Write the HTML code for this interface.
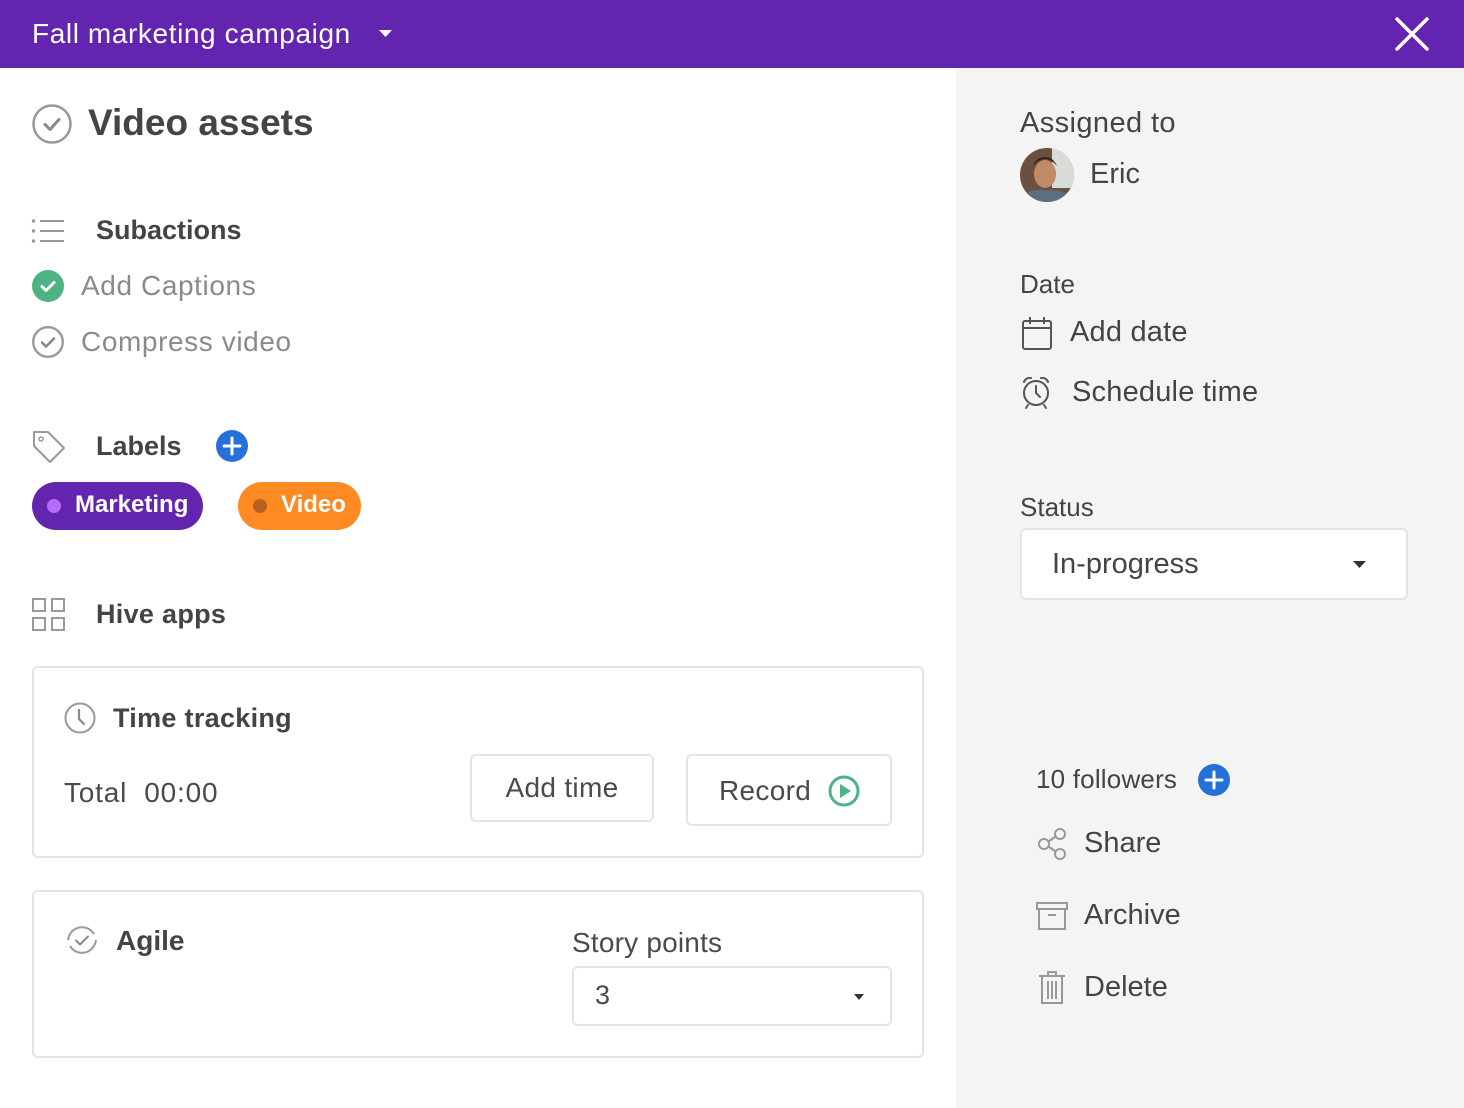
<!DOCTYPE html>
<html><head><meta charset="utf-8"><style>
*{margin:0;padding:0;box-sizing:border-box}
body{width:1464px;height:1108px;overflow:hidden;background:#fff;font-family:"Liberation Sans",sans-serif;color:#444;position:relative}
.a{position:absolute;white-space:nowrap}
.hdr{left:0;top:0;width:1464px;height:68px;background:#6324b0}
.side{left:956px;top:68px;width:508px;height:1040px;background:#f4f4f4}
.box{border:2px solid #e4e4e4;border-radius:6px;background:#fff}
.b{font-weight:bold;color:#444}
svg{position:absolute;overflow:visible}
</style></head><body>
<div class="a hdr"></div>
<div class="a" style="left:32px;top:18px;font-size:28px;color:#fff;letter-spacing:0.6px">Fall marketing campaign</div>
<svg style="left:379px;top:30px" width="14" height="8"><path d="M0 0H13L6.5 7Z" fill="#fff"/></svg>
<svg style="left:1395px;top:17px" width="34" height="34"><path d="M2 2L32 32M32 2L2 32" stroke="#fff" stroke-width="3.5" stroke-linecap="round"/></svg>
<div class="a side"></div>

<svg style="left:32px;top:104px" width="40" height="40"><circle cx="20" cy="20" r="18.5" fill="none" stroke="#999" stroke-width="2.5"/><path d="M13 20.5l5 5 9-10" fill="none" stroke="#888" stroke-width="3" stroke-linecap="round" stroke-linejoin="round"/></svg>
<div class="a b" style="left:88px;top:102px;font-size:37px;font-weight:bold;color:#444">Video assets</div>

<svg style="left:32px;top:219px" width="33" height="26"><g fill="#999"><circle cx="1.5" cy="2" r="1.7"/><circle cx="1.5" cy="12" r="1.7"/><circle cx="1.5" cy="22" r="1.7"/></g><path d="M8 2H32M8 12H32M8 22H32" stroke="#999" stroke-width="2"/></svg>
<div class="a b" style="left:96px;top:215px;font-size:27px">Subactions</div>
<svg style="left:32px;top:270px" width="32" height="32"><circle cx="16" cy="16" r="16" fill="#4eb383"/><path d="M10 16.5l4 4 8-8" fill="none" stroke="#fff" stroke-width="3" stroke-linecap="round" stroke-linejoin="round"/></svg>
<div class="a" style="left:81px;top:270px;font-size:28px;color:#8a8a8a;letter-spacing:0.6px">Add Captions</div>
<svg style="left:32px;top:326px" width="32" height="32"><circle cx="16" cy="16" r="14.8" fill="none" stroke="#999" stroke-width="2.4"/><path d="M10 16.5l4 4 8-8" fill="none" stroke="#888" stroke-width="2.6" stroke-linecap="round" stroke-linejoin="round"/></svg>
<div class="a" style="left:81px;top:326px;font-size:28px;color:#8a8a8a;letter-spacing:0.6px">Compress video</div>

<svg style="left:32px;top:430px" width="34" height="33"><path d="M2 2H16L32 18L18 32L2 16Z" fill="none" stroke="#999" stroke-width="2" stroke-linejoin="round"/><circle cx="9" cy="9" r="2" fill="none" stroke="#999" stroke-width="1.5"/></svg>
<div class="a b" style="left:96px;top:431px;font-size:27px">Labels</div>
<svg style="left:216px;top:430px" width="32" height="32"><circle cx="16" cy="16" r="16" fill="#2670d9"/><path d="M16 8V24M8 16H24" stroke="#fff" stroke-width="3" stroke-linecap="round"/></svg>
<div class="a" style="left:32px;top:482px;width:171px;height:48px;border-radius:24px;background:#6324b0"></div>
<div class="a" style="left:47px;top:499px;width:14px;height:14px;border-radius:50%;background:#b46bff"></div>
<div class="a" style="left:75px;top:491px;font-size:24px;color:#fff;font-weight:bold">Marketing</div>
<div class="a" style="left:238px;top:482px;width:123px;height:48px;border-radius:24px;background:#fd8a23"></div>
<div class="a" style="left:253px;top:499px;width:14px;height:14px;border-radius:50%;background:#b5621c"></div>
<div class="a" style="left:281px;top:491px;font-size:24px;color:#fff;font-weight:bold">Video</div>

<svg style="left:32px;top:598px" width="33" height="33"><g fill="none" stroke="#999" stroke-width="2"><rect x="1" y="1" width="12" height="12"/><rect x="20" y="1" width="12" height="12"/><rect x="1" y="20" width="12" height="12"/><rect x="20" y="20" width="12" height="12"/></g></svg>
<div class="a b" style="left:96px;top:599px;font-size:27px;letter-spacing:0.3px">Hive apps</div>

<div class="a box" style="left:32px;top:666px;width:892px;height:192px"></div>
<svg style="left:64px;top:702px" width="32" height="32"><circle cx="16" cy="16" r="14.5" fill="none" stroke="#999" stroke-width="2"/><path d="M15 8V17L20 22" fill="none" stroke="#888" stroke-width="2.2" stroke-linecap="round"/></svg>
<div class="a b" style="left:113px;top:703px;font-size:27px;letter-spacing:0.3px">Time tracking</div>
<div class="a" style="left:64px;top:777px;font-size:28px;color:#4a4a4a;letter-spacing:0.8px">Total&nbsp; 00:00</div>
<div class="a box" style="left:470px;top:754px;width:184px;height:68px"></div>
<div class="a" style="left:470px;top:772px;width:184px;text-align:center;font-size:28px;color:#4a4a4a;letter-spacing:0.3px">Add time</div>
<div class="a box" style="left:686px;top:754px;width:206px;height:72px"></div>
<div class="a" style="left:719px;top:775px;font-size:28px;color:#4a4a4a;letter-spacing:0.3px">Record</div>
<svg style="left:828px;top:775px" width="32" height="32"><circle cx="16" cy="16" r="14" fill="none" stroke="#4eb383" stroke-width="3"/><path d="M12 9L23 16L12 23Z" fill="#4eb383"/></svg>

<div class="a box" style="left:32px;top:890px;width:892px;height:168px"></div>
<svg style="left:66px;top:924px" width="32" height="32"><path d="M28 10A14 14 0 0 0 4 10M4 22A14 14 0 0 0 28 22M30 16A14 14 0 0 1 28 22M2 16A14 14 0 0 1 4 10" fill="none" stroke="#999" stroke-width="2"/><path d="M10 16.5l4 4 8-8" fill="none" stroke="#888" stroke-width="2" stroke-linecap="round"/></svg>
<div class="a b" style="left:116px;top:925px;font-size:28px">Agile</div>
<div class="a" style="left:572px;top:927px;font-size:28px;color:#4a4a4a;letter-spacing:0.2px">Story points</div>
<div class="a box" style="left:572px;top:966px;width:320px;height:60px"></div>
<div class="a" style="left:595px;top:980px;font-size:27px;color:#4a4a4a">3</div>
<svg style="left:854px;top:994px" width="11" height="7"><path d="M0 0H10L5 6Z" fill="#333"/></svg>

<div class="a" style="left:1020px;top:107px;font-size:29px;color:#444;letter-spacing:0.4px">Assigned to</div>
<svg style="left:1020px;top:148px" width="54" height="54"><defs><clipPath id="c"><circle cx="27" cy="27" r="27"/></clipPath></defs><g clip-path="url(#c)"><rect width="54" height="54" fill="#6b5040"/><rect x="32" y="0" width="22" height="40" fill="#d8dcd8"/><ellipse cx="25" cy="26" rx="11" ry="14" fill="#c18a66"/><path d="M13 18Q25 4 37 18Q33 9 25 9Q16 9 13 18Z" fill="#3a2418"/><path d="M0 54Q5 40 25 42Q45 40 54 54Z" fill="#5c6f80"/></g></svg>
<div class="a" style="left:1090px;top:158px;font-size:29px;color:#444">Eric</div>

<div class="a" style="left:1020px;top:269px;font-size:26px;color:#444">Date</div>
<svg style="left:1022px;top:316px" width="30" height="34"><rect x="1" y="5" width="28" height="28" rx="2" fill="none" stroke="#555" stroke-width="2"/><path d="M1 12H29M8 1V8M22 1V8" stroke="#555" stroke-width="2"/></svg>
<div class="a" style="left:1070px;top:316px;font-size:29px;color:#444;letter-spacing:0.2px">Add date</div>
<svg style="left:1021px;top:375px" width="32" height="34"><circle cx="15" cy="18" r="12" fill="none" stroke="#555" stroke-width="2"/><path d="M15 11V18L19 22M3 7A6 6 0 0 1 10 3M27 7A6 6 0 0 0 20 3M7 30L5 33M23 30L25 33" fill="none" stroke="#555" stroke-width="2" stroke-linecap="round"/></svg>
<div class="a" style="left:1072px;top:376px;font-size:29px;color:#444;letter-spacing:0.2px">Schedule time</div>

<div class="a" style="left:1020px;top:492px;font-size:26px;color:#444">Status</div>
<div class="a box" style="left:1020px;top:528px;width:388px;height:72px"></div>
<div class="a" style="left:1052px;top:548px;font-size:29px;color:#444">In-progress</div>
<svg style="left:1353px;top:561px" width="14" height="8"><path d="M0 0H13L6.5 7Z" fill="#333"/></svg>

<div class="a" style="left:1036px;top:764px;font-size:26px;color:#444;letter-spacing:0.2px">10 followers</div>
<svg style="left:1198px;top:764px" width="32" height="32"><circle cx="16" cy="16" r="16" fill="#2670d9"/><path d="M16 8V24M8 16H24" stroke="#fff" stroke-width="3" stroke-linecap="round"/></svg>
<svg style="left:1038px;top:828px" width="30" height="32"><g fill="none" stroke="#999" stroke-width="2"><circle cx="22" cy="6" r="5"/><circle cx="6" cy="16" r="5"/><circle cx="22" cy="26" r="5"/><path d="M10.5 13.5L17.5 8.5M10.5 18.5L17.5 23.5"/></g></svg>
<div class="a" style="left:1084px;top:827px;font-size:29px;color:#444">Share</div>
<svg style="left:1036px;top:902px" width="32" height="28"><g fill="none" stroke="#999" stroke-width="2"><rect x="1" y="1" width="30" height="6"/><rect x="3" y="7" width="26" height="20"/><path d="M12 13H20"/></g></svg>
<div class="a" style="left:1084px;top:899px;font-size:29px;color:#444">Archive</div>
<svg style="left:1038px;top:971px" width="28" height="34"><g fill="none" stroke="#999" stroke-width="2"><path d="M1 5H27M10 5V1H18V5M4 5V32H24V5M10 10V28M14 10V28M18 10V28"/></g></svg>
<div class="a" style="left:1084px;top:971px;font-size:29px;color:#444">Delete</div>
</body></html>
